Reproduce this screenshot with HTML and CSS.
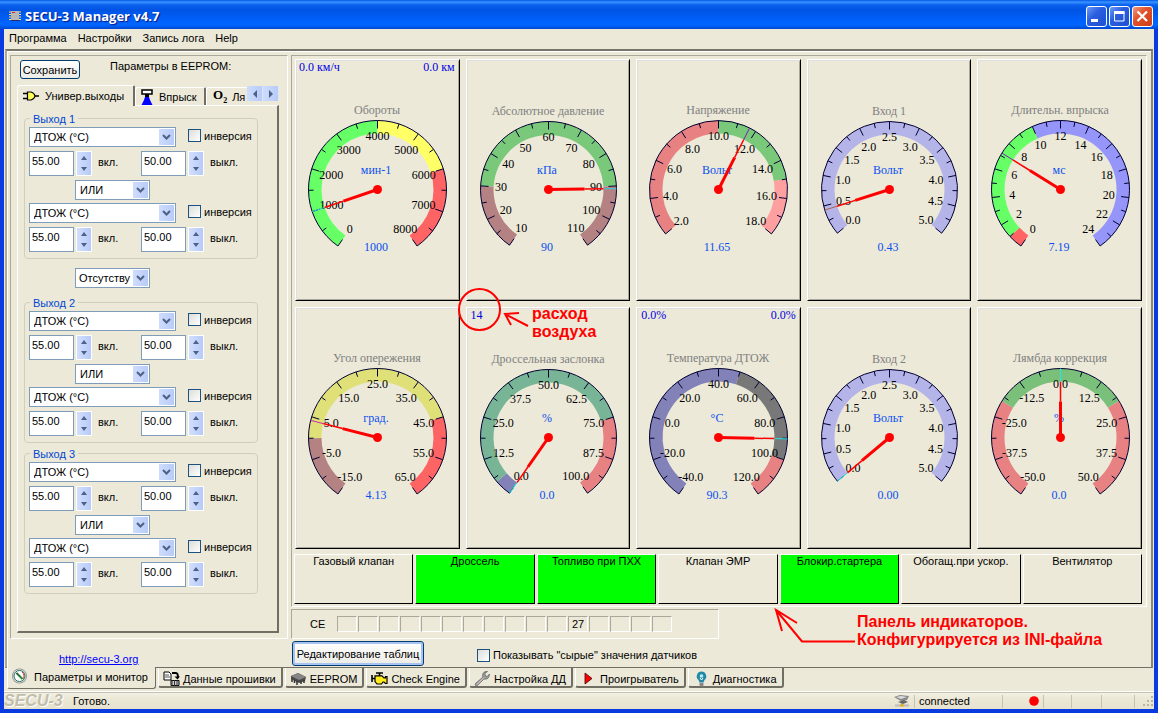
FILE: index.html
```html
<!DOCTYPE html>
<html lang="ru">
<head>
<meta charset="utf-8">
<title>SECU-3 Manager v4.7</title>
<link rel="stylesheet" href="styles.css">
</head>
<body>
<div class="window">
  <header class="titlebar">
    <svg class="app-icon" width="12" height="12" viewBox="0 0 12 12"><path d="M0 2h12M0 4.500h12M0 7h12M0 9.500h12" stroke="#ffe95c"/><rect x="2" y="1" width="8" height="9" fill="#b9b6b6"/><path d="M2 10.500h9" stroke="#2b2b70"/><path d="M3 2h3v1h-3z" fill="#d23"/></svg>
    <h1 class="title">SECU-3 Manager v4.7</h1>
    <div class="win-buttons">
      <button class="win-btn" aria-label="Свернуть"><svg width="19" height="19" viewBox="0 0 19 19"><path d="M4 13.500h7" stroke="#fff" stroke-width="3"/></svg></button>
      <button class="win-btn" aria-label="Развернуть"><svg width="19" height="19" viewBox="0 0 19 19"><path d="M4.500 5v9h9.500v-9z" stroke="#fff" fill="none"/><path d="M4 5.500h10.500" stroke="#fff" stroke-width="3"/></svg></button>
      <button class="win-btn close" aria-label="Закрыть"><svg width="19" height="19" viewBox="0 0 19 19"><path d="M4.500 4.500l9.500 9.500M14 4.500L4.500 14" stroke="#fff" stroke-width="2.200"/></svg></button>
    </div>
  </header>
  <nav class="menu">
    <button>Программа</button><button>Настройки</button><button>Запись лога</button><button>Help</button>
  </nav>

  <main class="page">
    <aside class="side">
      <section class="params">
        <div class="params-head">
          <button class="save">Сохранить</button>
          <span>Параметры в EEPROM:</span>
        </div>
        <div class="param-tabs">
          <button class="ptab active"><svg width="16" height="10" viewBox="0 0 16 10"><path d="M0 2.500h5M0 7.500h5M11 5h5" stroke="#000" stroke-width="1.500"/><path d="M4.500 1h3.500q3.500 1 4 4q-.5 3-4 4H4.500z" fill="#ff5" stroke="#000" stroke-width="1.200"/></svg>Универ.выходы</button>
          <button class="ptab"><svg width="12" height="16" viewBox="0 0 12 16"><path d="M1 1h10v4H1z" fill="#fff" stroke="#000" stroke-width="1.500"/><path d="M4 5h4v3H4z" fill="#000"/><path d="M4 8h4l1 3 2.500 5H.5L3 11z" fill="#00f"/></svg>Впрыск</button>
          <button class="ptab last"><span class="o2">O<sub>2</sub></span>Ля</button>
          <div class="scroller">
            <button aria-label="Назад"><svg width="6" height="8" viewBox="0 0 6 8"><path d="M5 0v8L1 4z" fill="#4d6185"/></svg></button>
            <button aria-label="Вперёд"><svg width="6" height="8" viewBox="0 0 6 8"><path d="M1 0v8l4-4z" fill="#4d6185"/></svg></button>
          </div>
        </div>
        <div class="param-page" id="outputs"></div>
      </section>
      <div class="site"><a href="http://secu-3.org">http://secu-3.org</a></div>
    </aside>

    <div class="monitor">
      <section class="frame">
        <div class="gauges" id="gauges"></div>
        <div class="indicators">
          <div class="lamp">Газовый клапан</div>
          <div class="lamp on">Дроссель</div>
          <div class="lamp on">Топливо при ПХХ</div>
          <div class="lamp">Клапан ЭМР
            <svg class="note note-lamps" width="340" height="50" viewBox="0 0 340 50"><path d="M85 36.500H32L6 5M27 18L6 5l6 21" class="ink"/><text x="87" y="22">Панель индикаторов.</text><text x="87" y="40">Конфигурируется из INI-файла</text></svg>
          </div>
          <div class="lamp on">Блокир.стартера</div>
          <div class="lamp">Обогащ.при ускор.</div>
          <div class="lamp">Вентилятор</div>
        </div>
      </section>
      <section class="errors">
        <span class="ce">CE</span>
        <div class="codes"><i></i><i></i><i></i><i></i><i></i><i></i><i></i><i></i><i></i><i></i><i></i><i>27</i><i></i><i></i><i></i><i></i></div>
      </section>
      <div class="actions">
        <button class="edit">Редактирование таблиц</button>
        <label class="check"><input type="checkbox">Показывать "сырые" значения датчиков</label>
      </div>
    </div>
  </main>

  <nav class="tabs">
    <button class="tab active"><svg width="17" height="17" viewBox="0 0 17 17"><circle cx="8.500" cy="8" r="7.500" fill="#888"/><circle cx="8.500" cy="8" r="6.800" fill="#ddd"/><circle cx="8.500" cy="8" r="5.500" fill="#fff" stroke="#22765e"/><path d="M11 4a5 5 0 0 1 1 7" stroke="#d33" fill="none"/><path d="M5.500 5l6 6" stroke="#158b33" stroke-width="2"/><path d="M5 5l4 3" stroke="#444"/></svg>Параметры и монитор</button>
    <button class="tab"><svg width="17" height="16" viewBox="0 0 17 16"><path d="M1 1h5l2 2v6H1z" fill="#fff" stroke="#000"/><path d="M2 4h4M2 6h5" stroke="#555"/><path d="M9 2h4q2 0 2 5" fill="none" stroke="#000" stroke-width="2"/><path d="M11.500 5.500h5.500l-2.500 3z"/><path d="M8 9.500h8v5H8z" fill="#ccc" stroke="#000"/><path d="M9 9v6M11.500 9v6M14 9v6" stroke="#333"/></svg>Данные прошивки</button>
    <button class="tab"><svg width="17" height="13" viewBox="0 0 17 13"><path d="M1 4l7-3 8 4-1 4-6 2-8-4z" fill="#4a4a4a"/><path d="M1 4l7-3 8 4-7 3z" fill="#858585"/><path d="M2 7v3M4.500 8v3M7 9v4M11 9v3M14 8v3" stroke="#333" stroke-width="1.500"/></svg>EEPROM</button>
    <button class="tab"><svg width="17" height="13" viewBox="0 0 17 13"><path d="M1 3v7M1 6.500h3M5 1h7M8.500 1v3" stroke="#000" stroke-width="1.600"/><path d="M4 3.800h7l2 2h1.500V4.500h1.500v7h-1.500L13 10h-1l-1.500 2H6L4 9.500z" fill="#ffec1a" stroke="#000" stroke-width="1.200"/></svg>Check Engine</button>
    <button class="tab"><svg width="17" height="16" viewBox="0 0 17 16"><path d="M15.500 3L13 5.500l-2-1 0-2L13.500.5Q9 0 8.500 4.500L9 6 1.500 12.500q-1 2 1 2.800L10 8q5 1 5.500-5z" fill="#999" stroke="#666" stroke-width=".8"/><path d="M3 13.500L10 6.500" stroke="#ddd"/></svg>Настройка ДД</button>
    <button class="tab"><svg width="17" height="14" viewBox="0 0 17 14"><path d="M5 1v11l7-5.500z" fill="#f00" stroke="#400" stroke-width=".8"/></svg>Проигрыватель</button>
    <button class="tab"><svg width="17" height="16" viewBox="0 0 17 16"><path d="M8.500.5a4.800 4.800 0 0 0-3 8.500l1 2.500h4l1-2.500a4.800 4.800 0 0 0-3-8.500z" fill="#2389a6"/><circle cx="8.500" cy="5" r="1.800" fill="#bdeaf5"/><path d="M7 7l1.500 2L10 7" stroke="#fff" fill="none"/><path d="M6.500 12h4v2.500l-2 1-2-1z" fill="#888"/></svg>Диагностика</button>
  </nav>

  <footer class="status">
    <span class="brand">SECU-3</span>
    <span class="ready">Готово.</span>
    <span class="link-icon"><svg width="16" height="13" viewBox="0 0 16 13"><path d="M0 3l6-2 9 1-2 4-6 1z" fill="#888"/><path d="M2 3l5-1 6 1-6 2z" fill="#ddd"/><path d="M4 8l6-2 4 2-5 2z" fill="#666"/><path d="M1 11.500h14" stroke="#bbb" stroke-width="2"/><path d="M8 9v2" stroke="#777"/><path d="M6 10.500h4v2H6z" fill="#e8b41c"/></svg></span>
    <span class="cell connected">connected</span>
    <span class="cell led"><svg width="10" height="10" viewBox="0 0 10 10"><circle cx="5" cy="5" r="4.800" fill="#f00"/></svg></span>
    <span class="cell s1"></span><span class="cell s2"></span><span class="cell s3"></span><span class="cell grip"><svg width="12" height="12" viewBox="0 0 12 12"><path d="M9 1h2v2H9zM5 5h2v2H5zM9 5h2v2H9zM1 9h2v2H1zM5 9h2v2H5zM9 9h2v2H9z" fill="#b8b4a2"/></svg></span>
  </footer>
</div>
<script src="app.js"></script>
</body>
</html>
```
FILE: styles.css
```css
* { box-sizing: border-box; }
html { background: #0a3fc8; }
body {
  margin: 0;
  font: 11px/14px "Liberation Sans", Arial, sans-serif;
  color: #000;
}
button, input, select { font: inherit; color: inherit; margin: 0; padding: 0; }
button { border: 0; background: none; white-space: nowrap; }
svg { flex: none; }

.window {
  display: flex;
  flex-direction: column;
  min-height: 100vh;
  border: solid #0a3be0;
  border-width: 0 4px 4px;
  background: #ece9d8;
}

/* title bar */
.titlebar {
  display: flex;
  align-items: center;
  height: 29px;
  margin: 0 -4px;
  padding: 3px 5px 0 9px;
  background: linear-gradient(#0058e6 0, #3a93ff 2px, #0a60ee 5px, #0054e3 10px, #0060fb 20px, #0066ff 25px, #0047cf 29px);
}
.title {
  flex: 1;
  margin: 0 0 0 4px;
  font: bold 13px/16px "Open Sans", "Noto Sans", sans-serif;
  color: #fff;
  text-shadow: 1px 1px 1px #0a1883;
}
.win-buttons { display: flex; gap: 2px; }
.win-btn {
  display: grid;
  place-items: center;
  width: 21px;
  height: 21px;
  border: 1px solid #fff;
  border-radius: 3px;
  background: linear-gradient(135deg, #6f9bf5, #2a5fe0 40%, #1f50d0);
}
.win-btn.close { background: linear-gradient(135deg, #f09a80, #e0532c 40%, #cf3d14); }

.menu { display: flex; gap: 11px; height: 20px; padding: 2px 5px 4px; }

/* main page */
.page {
  flex: 1;
  display: flex;
  gap: 3px;
  margin: 0 1px;
  padding: 4px 4px 0 3px;
  border: 2px solid #8a8778;
  border-top-color: #77756a;
  border-left-color: #aca899;
  border-bottom: 1px solid #716f64;
  box-shadow: inset 1px 1px #fff;
}
.side { display: flex; flex-direction: column; width: 278px; flex: none; }
.params {
  flex: 1;
  display: flex;
  flex-direction: column;
  padding: 3px 8px 5px 6px;
  border: 1px solid #fff;
  border-top-color: #aca899;
  border-left-color: #aca899;
}
.params-head { display: flex; gap: 30px; height: 26px; padding-left: 3px; }
.save {
  width: 60px;
  height: 19px;
  margin-top: 1px;
  border: 1px solid #003c74;
  border-radius: 3px;
  background: linear-gradient(#fff, #ecebe5);
}

.param-tabs { display: flex; align-items: flex-end; height: 20px; position: relative; z-index: 1; }
.ptab {
  display: flex;
  align-items: center;
  height: 18px;
  gap: 6px;
  padding: 0 6px 0 5px;
  border-top: 1px solid #fff;
  border-left: 1px solid #fff;
  border-right: 2px solid #716f64;
  border-radius: 3px 2px 0 0;
}
.ptab.active {
  height: 21px;
  gap: 6px;
  margin-bottom: -1px;
  width: 118px;
  background: #ece9d8;
}
.ptab:nth-child(2) { width: 71px; }
.ptab.last { flex: 1; border-right: 0; gap: 5px; padding-left: 6px; }
.o2 { font: bold 13px/14px "Liberation Serif", serif; }
.o2 sub { font-size: 8px; line-height: 8px; }
.scroller {
  display: flex;
  align-self: flex-start;
  position: absolute;
  right: 0;
  top: 1px;
}
.scroller button {
  display: grid;
  place-items: center;
  width: 16px;
  height: 15px;
  background: linear-gradient(90deg, #cddcfd, #b8cbf8);
  border-right: 1px solid #dce6fc;
}
.param-page {
  flex: 1;
  padding: 12px 19px 0 6px;
  border: 1px solid #fff;
  border-right: 2px solid #716f64;
  border-bottom: 2px solid #716f64;
}

/* one output group */
.output {
  position: relative;
  margin: 0;
  padding: 8px 4px 2px;
  border: 1px solid #d0cfbf;
  border-radius: 4px;
  display: flex;
  flex-direction: column;
}
.output + .output { margin-top: 10px; }
.output h2 {
  position: absolute;
  top: -7px;
  left: 5px;
  margin: 0;
  padding: 0 3px;
  font: inherit;
  color: #0046d5;
  background: #ece9d8;
}
.cond-head { display: flex; align-items: center; gap: 12px; }
.cond-head .check { padding-bottom: 3px; }
.check { display: flex; align-items: center; gap: 3px; white-space: nowrap; }
.check input {
  appearance: none;
  width: 13px;
  height: 13px;
  border: 1px solid #1c5180;
  background: linear-gradient(135deg, #dcdcd7, #fff);
}
.limits { display: flex; align-items: center; height: 25px; margin: 4px 0; }
.limits input {
  width: 45px;
  height: 25px;
  padding: 0 2px 5px;
  border: 1px solid #7f9db9;
  background: #fff;
}
.limits label { margin-left: 6px; padding-bottom: 4px; }
.limits .on { width: 43px; }
.spin {
  display: flex;
  flex-direction: column;
  width: 16px;
  height: 25px;
  margin-left: 2px;
  border: 1px solid #fff;
}
.spin button {
  flex: 1;
  display: grid;
  place-items: center;
  background: linear-gradient(90deg, #d2dffd, #b6caf8);
}
.combo { display: block; position: relative; height: 20px; }
.combo select {
  display: block;
  appearance: none;
  width: 100%;
  height: 20px;
  padding: 0 18px 0 4px;
  border: 1px solid #7f9db9;
  border-radius: 0;
  background: #fff;
}
.combo svg {
  position: absolute;
  right: 2px;
  top: 2px;
  pointer-events: none;
  background: linear-gradient(90deg, #cfdcfd, #b8cbf8);
}
.source { width: 147px; }
.logic { width: 75px; margin-left: 46px; margin-bottom: 3px; }
.between { width: 75px; margin: 9px 0 14px 51px; }
.between + .output { margin-top: 0; }
.between select { padding-left: 3px; }

.site { height: 28px; padding: 13px 0 0 49px; }
.site a { color: #00f; }

/* gauges */
.monitor { flex: 1; min-width: 0; display: flex; flex-direction: column; gap: 2px; }
.frame {
  flex: 1;
  display: flex;
  flex-direction: column;
  gap: 5px;
  padding: 3px 4px 2px 3px;
  border: 1px solid #fff;
  border-top-color: #aca899;
  border-left-color: #aca899;
}
.gauges {
  flex: 1;
  display: grid;
  grid-template-columns: repeat(5, minmax(0, 1fr));
  grid-auto-rows: 1fr;
  gap: 6px;
}
.gauge {
  position: relative;
  border: 1px solid #000;
  border-top-color: #fff;
  border-left-color: #fff;
  box-shadow: inset 1px 1px #dfdfdf, inset -1px -1px #aaa899;
  font: 12px/14px "Liberation Serif", "Times New Roman", serif;
  display: flex;
  justify-content: center;
}
.gauge > .dial { overflow: visible; }
.corners {
  position: absolute;
  inset: 0 4px auto 3px;
  display: flex;
  justify-content: space-between;
  color: #0000e6;
}
.corners.inset { left: 4px; }
.dial text { text-anchor: middle; }
.dial .name { fill: #808080; }
.dial .live { fill: #0a50f0; }
.rim { fill: none; stroke: #000030; }

.indicators { display: grid; grid-template-columns: repeat(7, 1fr); gap: 2px; height: 50px; margin-left: -1px; }
.lamp {
  position: relative;
  text-align: center;
  line-height: 13px;
  white-space: nowrap;
  border: 1px solid #fff;
  border-right: 1px solid #000;
  border-bottom: 1px solid #000;
}
.lamp.on { background: #0f0; }

/* red remarks drawn over the panels */
.note { position: absolute; z-index: 3; overflow: visible; pointer-events: none; }
.note .ink { fill: none; stroke: #f00; stroke-width: 2; }
.note text { font: bold 16px "Liberation Sans", Arial, sans-serif; fill: #f00; text-anchor: start; }
.note-air { left: -10px; top: -22px; }
.note-lamps { left: 111px; top: 50px; }

.errors {
  display: flex;
  align-items: center;
  width: 428px;
  height: 30px;
  padding-left: 18px;
  border: 1px solid #fff;
  border-top-color: #aca899;
  border-left-color: #aca899;
}
.ce { width: 27px; }
.codes { display: flex; gap: 1px; }
.codes i {
  width: 20px;
  height: 16px;
  border: 1px solid #fff;
  border-top-color: #aca899;
  border-left-color: #aca899;
  font-style: normal;
  text-align: center;
}
.actions { display: flex; align-items: flex-start; gap: 53px; height: 26px; padding-left: 1px; }
.edit {
  width: 132px;
  height: 25px;
  border: 1px solid #003c74;
  border-radius: 3px;
  background: linear-gradient(#fff, #ecebe5);
  box-shadow: inset 0 0 0 2px #a8c3f0;
}
.actions .check { margin-top: 7px; }

/* bottom tabs */
.tabs { display: flex; gap: 2px; height: 24px; padding: 0 3px; border-bottom: 1px solid #fff; }
.tab {
  display: flex;
  align-items: center;
  gap: 3px;
  height: 20px;
  padding: 3px 5px 0 4px;
  border: 1px solid #fff;
  border-top: 0;
  border-right: 2px solid #716f64;
  border-bottom: 2px solid #716f64;
  border-radius: 0 0 3px 3px;
}
.tab.active {
  position: relative;
  height: 22px;
  margin-top: -1px;
  padding: 0 7px 2px 3px;
  gap: 6px;
  background: #ece9d8;
  border-right: 1px solid #716f64;
  border-bottom-width: 1px;
}

.status {
  display: flex;
  align-items: center;
  height: 17px;
  border-top: 1px solid #c5c2b2;
  background: linear-gradient(#f3f1e4, #ece9d8 5px, #e6e2ce);
}
.brand {
  width: 69px;
  font: italic bold 16px/16px "Liberation Sans", Arial, sans-serif;
  color: #c2beac;
  text-shadow: 1px 1px #fff;
}
.ready { flex: 1; }
.link-icon { width: 20px; height: 14px; }
.cell { display: flex; align-items: center; height: 13px; border-left: 1px solid #c5c2b2; }
.connected { width: 88px; padding-left: 4px; }
.led { width: 41px; padding-left: 26px; }
.s1 { width: 28px; }
.s2 { width: 30px; }
.s3 { width: 33px; }
.grip { width: 20px; padding-left: 7px; }
```
FILE: app.js
```js
const chevron = '<svg width="15" height="16" viewBox="0 0 15 16"><path d="M4 6l3.500 3.500L11 6" fill="none" stroke="#4d6185" stroke-width="2"/></svg>';

const combo = (cls, label, value) =>
  `<span class="combo ${cls}"><select aria-label="${label}"><option>${value}</option></select>${chevron}</span>`;

const spin = '<span class="spin"><button aria-label="Больше"><svg width="6" height="4" viewBox="0 0 6 4"><path d="M0 4h6L3 0z" fill="#4d6185"/></svg></button><button aria-label="Меньше"><svg width="6" height="4" viewBox="0 0 6 4"><path d="M0 0h6L3 4z" fill="#4d6185"/></svg></button></span>';

const condition = id => `
  <div class="cond-head">${combo('source', 'Источник', 'ДТОЖ (°C)')}
    <label class="check"><input type="checkbox">инверсия</label></div>
  <div class="limits">
    <input type="text" value="55.00" id="on${id}">${spin}<label class="on" for="on${id}">вкл.</label>
    <input type="text" value="50.00" id="off${id}">${spin}<label for="off${id}">выкл.</label>
  </div>`;

const output = n => `<section class="output"><h2>Выход ${n}</h2>${condition(n + 'a')}${combo('logic', 'Функция', 'ИЛИ')}${condition(n + 'b')}</section>`;

document.getElementById('outputs').innerHTML =
  output(1) + combo('between', 'Связь', 'Отсутству') + output(2) + output(3);

const gauges = [
  { name: 'Обороты', unit: 'мин-1', text: '1000', value: 1000, min: 0, max: 8000, step: 1000, digits: 0, span: 290, tip: '#30d0e0',
    zones: [[0, 4000, '#66ff66'], [4000, 6000, '#ffff66'], [6000, 8000, '#ff6464']], corners: ['0.0 км/ч', '0.0 км'] },
  { name: 'Абсолютное давление', unit: 'кПа', text: '90', value: 90.8, min: 10, max: 110, step: 10, digits: 0, span: 290, tip: '#30d0e0', small: true,
    zones: [[10, 30, '#b48282'], [30, 90, '#7ac87a'], [90, 110, '#b48282']] },
  { name: 'Напряжение', unit: 'Вольт', text: '11.65', value: 11.65, min: 2, max: 18, step: 2, digits: 1, span: 260, tip: '#7a20b0',
    zones: [[2, 10, '#e88282'], [10, 15, '#7ac87a'], [15, 18, '#ffa0a0']] },
  { name: 'Вход 1', unit: 'Вольт', text: '0.43', value: 0.43, min: 0, max: 5, step: 0.5, digits: 1, span: 260, tip: '#b06040', small: true,
    zones: [[0, 5, '#b4b4e8']] },
  { name: 'Длительн. впрыска', unit: 'мс', text: '7.19', value: 7.19, min: 0, max: 24, step: 2, digits: 0, span: 290, tip: '#7a20b0',
    zones: [[0, 1, '#ff6464'], [1, 10, '#66ff66'], [10, 24, '#9696fa']] },
  { name: 'Угол опережения', unit: 'град.', text: '4.13', value: 4.13, min: -15, max: 65, step: 10, digits: 1, span: 290, tip: '#c828b0',
    zones: [[-15, 0, '#b48282'], [0, 45, '#e0e078'], [45, 65, '#ff6464']] },
  { name: 'Дроссельная заслонка', unit: '%', text: '0.0', value: 0, min: 0, max: 100, step: 12.5, digits: 1, span: 290, tip: '#00f0f0', small: true,
    zones: [[0, 5, '#8282b8'], [5, 75, '#78b496'], [75, 100, '#e88282']], corners: ['14', ''], inset: true, note: true },
  { name: 'Температура ДТОЖ', unit: '°C', text: '90.3', value: 90.3, min: -40, max: 120, step: 20, digits: 1, span: 290, tip: '#20e8e8',
    zones: [[-40, 50, '#8282b8'], [50, 100, '#787878'], [100, 120, '#e88282']], corners: ['0.0%', '0.0%'], inset: true },
  { name: 'Вход 2', unit: 'Вольт', text: '0.00', value: 0, min: 0, max: 5, step: 0.5, digits: 1, span: 260, tip: '#20e8e8', small: true,
    zones: [[0, 5, '#b4b4e8']] },
  { name: 'Лямбда коррекция', unit: '%', text: '0.0', value: 0, min: -50, max: 50, step: 12.5, digits: 1, span: 290, tip: '#20e8e8',
    zones: [[-50, -20, '#e88282'], [-20, 20, '#7ac07a'], [20, 50, '#e88282']] }
];

const airNote = `<svg class="note note-air" width="150" height="56" viewBox="0 0 150 56"><circle cx="22.500" cy="23.500" r="20.500" class="ink"/><path d="M71 40L48 28M62 27L48 28l6 11" class="ink"/><text x="75" y="33">расход</text><text x="75" y="51">воздуха</text></svg>`;

function dial(g) {
  const cx = 80.5, cy = 129.5, R = g.small ? 68 : 69, r = R - 13;
  const angle = v => (v - g.min) / (g.max - g.min) * g.span - g.span / 2;
  const at = (a, d) => {
    const t = a * Math.PI / 180;
    return [(cx + d * Math.sin(t)).toFixed(1), (cy - d * Math.cos(t)).toFixed(1)].join(' ');
  };
  const line = (a, d1, d2, color, w) => `<path d="M${at(a, d1)}L${at(a, d2)}" stroke="${color}" stroke-width="${w}"/>`;

  let s = '';
  for (const [from, to, color] of g.zones) {
    const a = angle(from), b = angle(to), big = b - a > 180 ? 1 : 0;
    s += `<path fill="${color}" d="M${at(a, R)}A${R} ${R} 0 ${big} 1 ${at(b, R)}L${at(b, r)}A${r} ${r} 0 ${big} 0 ${at(a, r)}Z"/>`;
  }
  s += `<path class="rim" d="M${at(-g.span / 2, R)}A${R} ${R} 0 1 1 ${at(g.span / 2, R)}"/>`;
  const count = Math.round((g.max - g.min) / g.step);
  for (let i = 0; i <= count * 2; i++) {
    const a = i / count / 2 * g.span - g.span / 2;
    s += line(a, R, R - (i % 2 ? 5 : 8), '#000030', 1);
    if (i % 2) continue;
    const [x, y] = at(a, (a === 0 ? 54 : 48.5) + (R - 69)).split(' ');
    s += `<text x="${x}" y="${+y + 4}">${(g.min + i / 2 * g.step + 1e-9).toFixed(g.digits)}</text>`;
  }
  s += `<text class="name" x="80" y="${g.small ? 55 : 54}">${g.name}</text>`;
  s += `<text class="live" x="79" y="114">${g.unit}</text><text class="live" x="79" y="191">${g.text}</text>`;
  const n = angle(g.value);
  s += line(n, 0, 36, '#f00', 3) + line(n, 36, r, '#f00', 1.5) + line(n, r, R, g.tip, 1);
  s += `<circle cx="${cx}" cy="${cy}" r="4.500" fill="#f00"/>`;
  return `<svg class="dial" width="160" height="200" viewBox="0 0 160 200">${s}</svg>`;
}

document.getElementById('gauges').innerHTML = gauges.map(g => {
  const corners = g.corners ? `<div class="corners${g.inset ? ' inset' : ''}"><span>${g.corners[0]}</span><span>${g.corners[1]}</span></div>` : '';
  return `<div class="gauge">${dial(g)}${corners}${g.note ? airNote : ''}</div>`;
}).join('');
```
